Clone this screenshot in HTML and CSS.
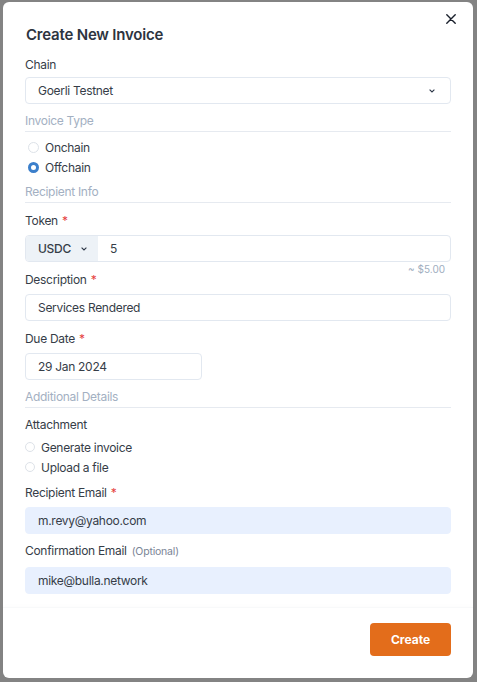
FILE: index.html
```html
<!DOCTYPE html>
<html lang="en">
<head>
<meta charset="utf-8">
<title>Create New Invoice</title>
<link rel="stylesheet" href="styles.css">
</head>
<body>
<div class="backdrop">
  <div class="modal">
    <button class="close" aria-label="Close">
      <svg width="10" height="10" viewBox="0 0 10 10"><path d="M0.8 0.8 L9.2 9.2 M9.2 0.8 L0.8 9.2" stroke="#1a202c" stroke-width="1.4" stroke-linecap="round"/></svg>
    </button>
    <div class="header">Create New Invoice</div>
    <div class="body">
      <div class="label label-chain">Chain</div>
      <div class="input select">
        <span>Goerli Testnet</span>
        <svg class="chev" width="6" height="4" viewBox="0 0 6 4"><path d="M0.6 0.6 L3 3 L5.4 0.6" fill="none" stroke="#2d3748" stroke-width="1.1"/></svg>
      </div>

      <div class="section s-invoice">Invoice Type</div>
      <div class="radios radios-type">
        <div class="radio-row"><span class="radio"></span>Onchain</div>
        <div class="radio-row"><span class="radio checked"></span>Offchain</div>
      </div>

      <div class="section s-recipient">Recipient Info</div>
      <div class="label label-token">Token<span class="req">*</span></div>
      <div class="input group">
        <div class="addon">USDC <svg width="6" height="4" viewBox="0 0 6 4"><path d="M0.6 0.6 L3 3 L5.4 0.6" fill="none" stroke="#2d3748" stroke-width="1.1"/></svg></div>
        <div class="group-value">5</div>
      </div>
      <div class="helper">~ $5.00</div>

      <div class="label label-desc">Description<span class="req">*</span></div>
      <div class="input">Services Rendered</div>

      <div class="label label-date">Due Date<span class="req">*</span></div>
      <div class="input date">29 Jan 2024</div>

      <div class="section s-additional">Additional Details</div>
      <div class="label label-attach">Attachment</div>
      <div class="radios radios-attach">
        <div class="radio-row"><span class="radio small"></span>Generate invoice</div>
        <div class="radio-row"><span class="radio small"></span>Upload a file</div>
      </div>

      <div class="label label-email">Recipient Email<span class="req">*</span></div>
      <div class="input filled">m.revy@yahoo.com</div>

      <div class="label label-confirm">Confirmation Email<span class="optional">(Optional)</span></div>
      <div class="input filled confirm">mike@bulla.network</div>
    </div>
    <div class="footer">
      <button class="create">Create</button>
    </div>
  </div>
</div>
</body>
</html>
```

FILE: styles.css
```css
* { box-sizing: border-box; }
html, body { margin: 0; padding: 0; }
body {
  background: #838383;
  font-family: Inter, "Noto Sans", sans-serif;
  color: #363d48;
  width: 477px;
  height: 682px;
  overflow: hidden;
}
.backdrop {
  padding: 2px 4px 0 3px;
}
.modal {
  position: relative;
  width: 470px;
  height: 676px;
  background: #ffffff;
  border-radius: 6px;
  display: flex;
  flex-direction: column;
}
.close {
  position: absolute;
  top: 5px;
  right: 10px;
  width: 24px;
  height: 24px;
  border: none;
  background: transparent;
  display: flex;
  align-items: center;
  justify-content: center;
  padding: 0;
}
.header {
  padding: 23px 22px 0 23px;
  font-size: 15px;
  line-height: 20px;
  font-weight: 600;
  letter-spacing: -0.2px;
  color: #2d3440;
}
.body {
  padding: 0 22px;
  display: flex;
  flex-direction: column;
  letter-spacing: -0.3px;
}
.label {
  font-size: 12px;
  line-height: 16px;
  color: #363d48;
  margin-bottom: 6px;
}
.req { color: #e53e3e; margin-left: 4px; }
.optional { font-size: 10.5px; color: #7a8496; margin-left: 5px; letter-spacing: -0.2px; }
.label-chain { margin-top: 12px; margin-bottom: 4px; }
.label-token { margin-top: 10px; }
.label-desc { margin-top: 1px; }
.label-date { margin-top: 10px; }
.label-attach { margin-top: 9px; margin-bottom: 0; }
.label-email { margin-top: 8px; }
.label-confirm { margin-top: 9px; margin-bottom: 7px; }

.input {
  height: 27px;
  border: 1px solid #e2e8f0;
  border-radius: 4px;
  padding: 0 12px;
  display: flex;
  align-items: center;
  font-size: 12px;
  color: #363d48;
}
.select { justify-content: space-between; padding-right: 15px; }
.date { width: 177px; }
.filled { background: #e8f0fe; border-color: #e8f0fe; }

.group { padding: 0; overflow: hidden; }
.addon {
  width: 72px;
  height: 100%;
  background: #edf2f7;
  display: flex;
  align-items: center;
  gap: 10px;
  padding-left: 12px;
  font-weight: 500;
}
.group-value { padding-left: 12px; }

.helper {
  height: 7px;
  line-height: 10px;
  font-size: 10px;
  color: #a0aec0;
  text-align: right;
  padding-right: 6px;
  margin-top: 2px;
  letter-spacing: 0;
}

.section {
  font-size: 12px;
  line-height: 16px;
  color: #a3b0c2;
  padding-bottom: 2px;
  border-bottom: 1px solid #e6eaf0;
}
.s-invoice { margin-top: 9px; }
.s-recipient { margin-top: 7px; }
.s-additional { margin-top: 9px; }

.radios { display: flex; flex-direction: column; }
.radios-type { margin-top: 5px; padding-left: 3px; }
.radios-attach { margin-top: 4px; }
.radio-row {
  display: flex;
  align-items: center;
  gap: 6px;
  height: 20px;
  font-size: 12px;
  color: #363d48;
}
.radio {
  width: 11px;
  height: 11px;
  border-radius: 50%;
  border: 1px solid #dde2e8;
  background: #fff;
  flex: none;
}
.radio.small { width: 10px; height: 10px; }
.radio.checked {
  width: 11px;
  height: 11px;
  border: 3.5px solid #3b7fcb;
}

.footer {
  margin-top: auto;
  height: 71px;
  display: flex;
  justify-content: flex-end;
  align-items: flex-start;
  padding: 15px 22px 0 0;
  border-top: 1px solid #f8f9fa;
  box-shadow: 0 -2px 4px rgba(0, 0, 0, 0.012);
}
.create {
  width: 81px;
  height: 33px;
  border: none;
  border-radius: 4px;
  background: #e36d1b;
  color: #ffffff;
  font-family: Inter, "Noto Sans", sans-serif;
  font-size: 12px;
  font-weight: 700;
}
```
